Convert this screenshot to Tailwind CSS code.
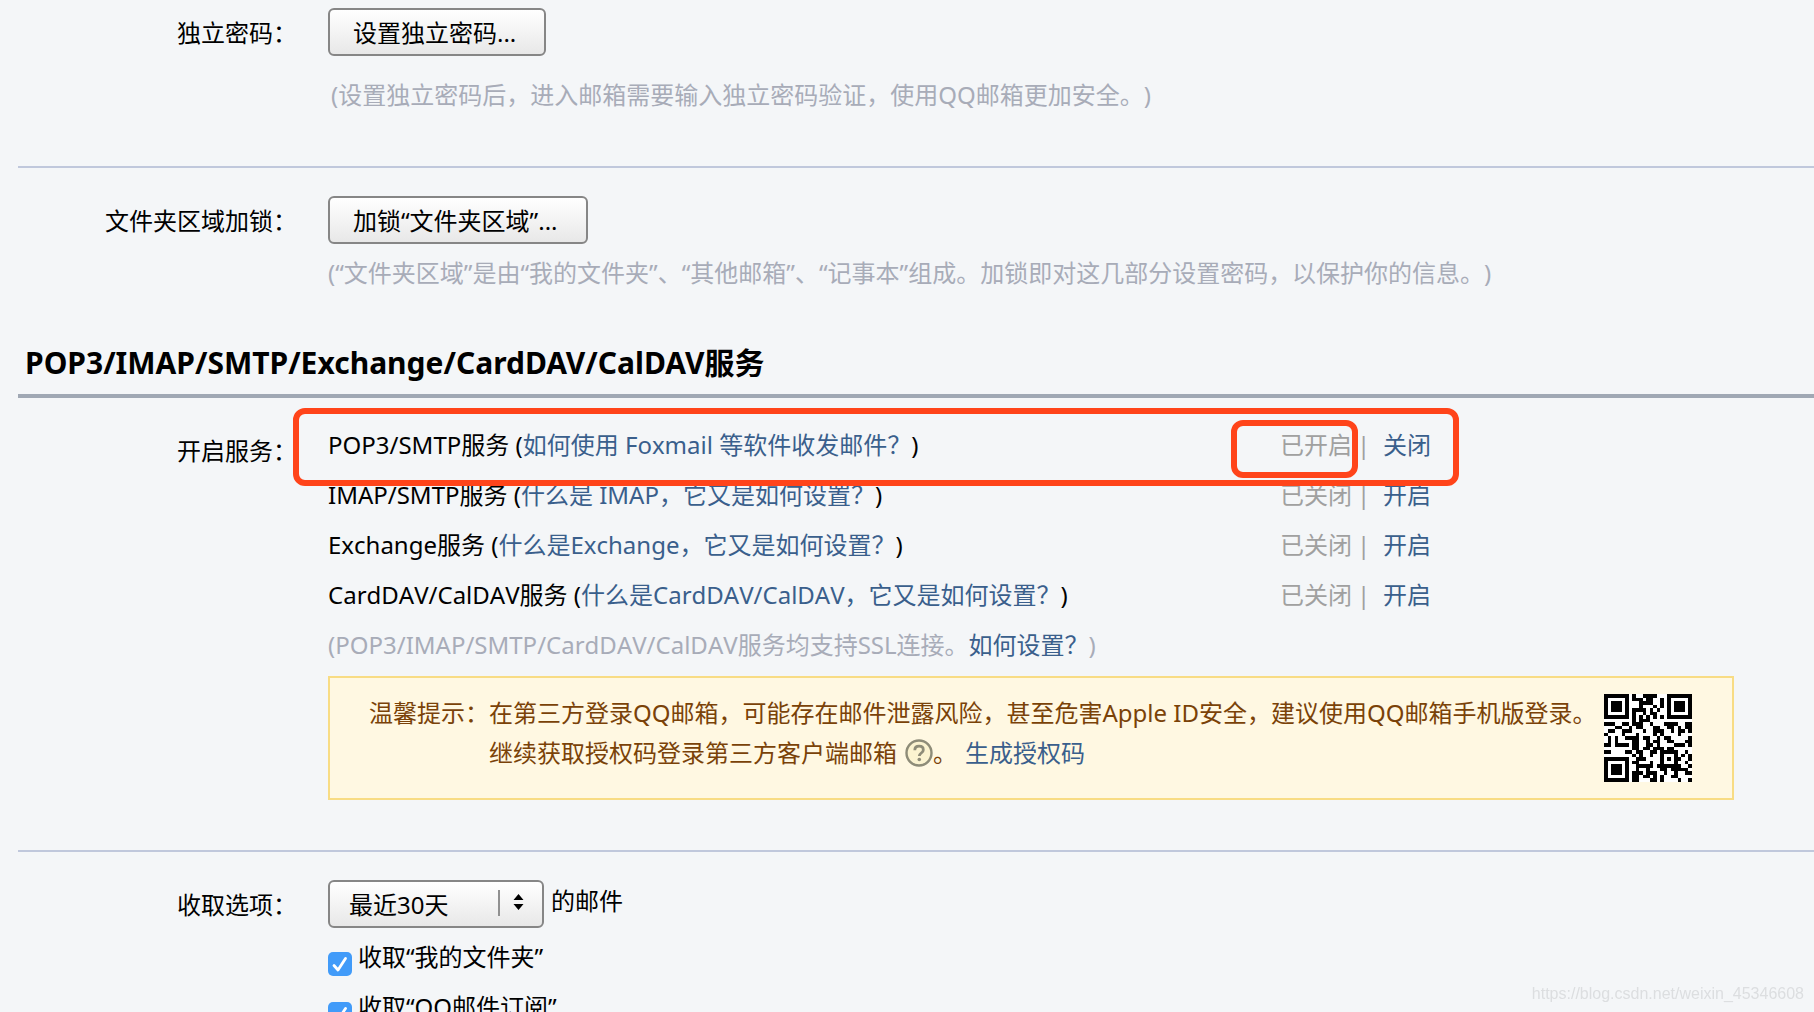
<!DOCTYPE html>
<html lang="zh-CN">
<head>
<meta charset="utf-8">
<title>邮箱设置</title>
<script src="https://cdn.jsdelivr.net/npm/@tailwindcss/browser@4"></script>
</head>
<body class="h-screen overflow-hidden bg-[#f4f6f8] font-['Noto_Sans','Noto_Sans_CJK_SC',sans-serif] text-2xl text-black [font-kerning:none] [text-spacing-trim:space-all]">
<main class="relative pl-[18px]">

  <section class="flex gap-[31px] border-b-2 border-[#c0c8dc] pt-2 pb-[53px]">
    <div class="w-[279px] shrink-0 text-right leading-[50px]">独立密码：</div>
    <div>
      <button type="button" class="block h-12 w-[218px] rounded-md border-2 border-[#868686] bg-linear-to-b from-white to-[#e8e8e8] pl-[23px] text-left leading-[46px] whitespace-nowrap">设置独立密码...</button>
      <p class="mt-[21px] pl-[3px] leading-9 whitespace-nowrap text-[#a8acb8]">(设置独立密码后，进入邮箱需要输入独立密码验证，使用QQ邮箱更加安全。)</p>
    </div>
  </section>

  <section class="flex gap-[31px] pt-7">
    <div class="w-[279px] shrink-0 text-right leading-[50px]">文件夹区域加锁：</div>
    <div>
      <button type="button" class="block h-12 w-[260px] rounded-md border-2 border-[#868686] bg-linear-to-b from-white to-[#e8e8e8] pl-[23px] text-left leading-[46px] whitespace-nowrap">加锁“文件夹区域”...</button>
      <p class="mt-[11px] leading-9 whitespace-nowrap text-[#a8acb8]">(“文件夹区域”是由“我的文件夹”、“其他邮箱”、“记事本”组成。加锁即对这几部分设置密码，以保护你的信息。)</p>
    </div>
  </section>

  <h2 class="mt-[52px] border-b-4 border-[#a0a8b4] pb-[11px] pl-[7px] text-[30px] leading-10 font-bold [font-kerning:normal]">POP3/IMAP/SMTP/Exchange/CardDAV/CalDAV服务</h2>

  <section class="flex gap-[31px] border-b-2 border-[#c0c8dc] pt-[22px] pb-[50px]">
    <div class="w-[279px] shrink-0 pt-[6px] text-right leading-[50px]">开启服务：</div>
    <div class="min-w-0 flex-1 pr-20">
      <ul class="leading-[50px] whitespace-nowrap">
        <li class="relative flex">
          <span class="w-[952px]">POP3/SMTP服务 (<a href="#" class="text-[#3a5f8c]">如何使用 Foxmail 等软件收发邮件？</a>)</span>
          <span class="w-[77px] text-[#a0a0a0]">已开启</span><span class="w-[26px] text-[#a0a0a0]">|</span>
          <a href="#" class="text-[#3a5f8c]">关闭</a>
          <span class="pointer-events-none absolute -top-3 -left-[35px] h-[78px] w-[1166px] rounded-xl border-6 border-[#ff441a]"></span>
          <span class="pointer-events-none absolute top-0 left-[903px] h-[58px] w-[127px] rounded-xl border-6 border-[#ff441a]"></span>
        </li>
        <li class="flex">
          <span class="w-[952px]">IMAP/SMTP服务 (<a href="#" class="text-[#3a5f8c]">什么是 IMAP，它又是如何设置？</a>)</span>
          <span class="w-[77px] text-[#a0a0a0]">已关闭</span><span class="w-[26px] text-[#a0a0a0]">|</span>
          <a href="#" class="text-[#3a5f8c]">开启</a>
        </li>
        <li class="flex">
          <span class="w-[952px]">Exchange服务 (<a href="#" class="text-[#3a5f8c]">什么是Exchange，它又是如何设置？</a>)</span>
          <span class="w-[77px] text-[#a0a0a0]">已关闭</span><span class="w-[26px] text-[#a0a0a0]">|</span>
          <a href="#" class="text-[#3a5f8c]">开启</a>
        </li>
        <li class="flex">
          <span class="w-[952px]">CardDAV/CalDAV服务 (<a href="#" class="text-[#3a5f8c]">什么是CardDAV/CalDAV，它又是如何设置？</a>)</span>
          <span class="w-[77px] text-[#a0a0a0]">已关闭</span><span class="w-[26px] text-[#a0a0a0]">|</span>
          <a href="#" class="text-[#3a5f8c]">开启</a>
        </li>
        <li class="text-[#a8acb8]">(POP3/IMAP/SMTP/CardDAV/CalDAV服务均支持SSL连接。<a href="#" class="text-[#3a5f8c]">如何设置？</a>)</li>
      </ul>
      <div class="mt-[6px] flex h-[124px] justify-between border-2 border-[#f8dc84] bg-[#fff8e2] pt-[15px] pr-10 pl-[39px] text-[#7a4208]">
        <div class="flex leading-10 whitespace-nowrap">
          <span>温馨提示：</span>
          <div>
            <p>在第三方登录QQ邮箱，可能存在邮件泄露风险，甚至危害Apple ID安全，建议使用QQ邮箱手机版登录。</p>
            <p class="flex items-center">继续获取授权码登录第三方客户端邮箱<svg class="ml-2 size-7" viewBox="0 0 28 28" fill="none" role="img" aria-label="帮助"><circle cx="14" cy="14" r="12.5" fill="#fbf3d0" stroke="#8e8c78" stroke-width="2.4"/><path d="M9.8 11.2c0-2.6 1.8-4 4.3-4s4.2 1.4 4.2 3.7c0 3.2-4 3-4 6.2" stroke="#8e8c78" stroke-width="2.8"/><circle cx="14.3" cy="20.5" r="1.8" fill="#8e8c78"/></svg>。<a href="#" class="ml-2 text-[#3a5f8c]">生成授权码</a></p>
          </div>
        </div>
        <svg id="qr" class="mt-px size-[88px] shrink-0" viewBox="0 0 25 25" shape-rendering="crispEdges" role="img" aria-label="二维码"></svg>
      </div>
    </div>
  </section>

  <section class="flex gap-[31px] pt-7">
    <div class="w-[279px] shrink-0 text-right leading-[50px]"><label for="range">收取选项：</label></div>
    <div>
      <div class="flex gap-[7px]">
        <div class="relative">
          <select id="range" class="block h-12 w-[216px] appearance-none rounded-md border-2 border-[#868686] bg-linear-to-b from-white to-[#e8e8e8] pt-[2px] pl-[19px]"><option>最近30天</option><option>全部</option></select>
          <svg class="pointer-events-none absolute top-[10px] right-[18px] h-[26px] w-7" viewBox="0 0 28 26"><path d="M1 0v26" stroke="#909090" stroke-width="2"/><path d="M15.5 10l5-6 5 6zM15.5 14h10l-5 6z"/></svg>
        </div>
        <label for="range" class="leading-[42px]">的邮件</label>
      </div>
      <div class="mt-1">
        <div class="flex h-[50px] gap-[6px]">
          <span class="relative mt-5 size-6"><input id="f1" type="checkbox" checked class="block size-6 appearance-none rounded-[5px] bg-[#419bf9]"><svg class="pointer-events-none absolute inset-0" viewBox="0 0 24 24" fill="none" stroke="#fff" stroke-width="2.8" stroke-linecap="round" stroke-linejoin="round"><path d="M6 13.5l4 4.5L17.5 6.5"/></svg></span>
          <label for="f1" class="leading-[50px]">收取“我的文件夹”</label>
        </div>
        <div class="flex h-[50px] gap-[6px]">
          <span class="relative mt-5 size-6"><input id="f2" type="checkbox" checked class="block size-6 appearance-none rounded-[5px] bg-[#419bf9]"><svg class="pointer-events-none absolute inset-0" viewBox="0 0 24 24" fill="none" stroke="#fff" stroke-width="2.8" stroke-linecap="round" stroke-linejoin="round"><path d="M6 13.5l4 4.5L17.5 6.5"/></svg></span>
          <label for="f2" class="leading-[50px]">收取“QQ邮件订阅”</label>
        </div>
      </div>
    </div>
  </section>
</main>
<div class="fixed right-[10px] bottom-2 font-['Liberation_Sans',sans-serif] text-base leading-5 text-[#dcdee0]">https://blog.csdn.net/weixin_45346608</div>
<script>
// Version 2-L QR code (25 modules), byte mode, one Reed-Solomon block, mask 1
function qr(text) {
  const N = 25, dataLen = 34, ecLen = 10, mask = 1;
  const bits = [];
  const put = (v, n) => { for (let i = n - 1; i >= 0; i--) bits.push(v >> i & 1); };
  put(4, 4); put(text.length, 8);
  for (const c of text) put(c.charCodeAt(0), 8);
  put(0, 4);
  while (bits.length % 8) bits.push(0);
  const data = [];
  for (let i = 0; i < bits.length; i += 8) data.push(parseInt(bits.slice(i, i + 8).join(''), 2));
  for (let p = 0; data.length < dataLen; p++) data.push(p % 2 ? 0x11 : 0xec);
  const mul = (a, b) => { let r = 0; for (; b; b >>= 1) { if (b & 1) r ^= a; a <<= 1; if (a & 256) a ^= 0x11d; } return r; };
  let gen = [1], root = 1;
  for (let i = 0; i < ecLen; i++) {
    const next = gen.concat(0);
    gen.forEach((g, j) => { next[j + 1] ^= mul(g, root); });
    gen = next; root = mul(root, 2);
  }
  const rem = data.concat(Array(ecLen).fill(0));
  for (let i = 0; i < data.length; i++) { const f = rem[i]; if (f) gen.forEach((g, j) => { rem[i + j] ^= mul(g, f); }); }
  const stream = data.concat(rem.slice(data.length)).flatMap(b => [7, 6, 5, 4, 3, 2, 1, 0].map(i => b >> i & 1));
  const m = Array.from({ length: N }, () => Array(N).fill(null));
  const finder = (r, c) => {
    for (let i = -1; i < 8; i++) for (let j = -1; j < 8; j++) {
      if (r + i < 0 || c + j < 0 || r + i >= N || c + j >= N) continue;
      const d = Math.max(Math.abs(i - 3), Math.abs(j - 3));
      m[r + i][c + j] = d === 3 || d < 2 ? 1 : 0;
    }
  };
  finder(0, 0); finder(0, 18); finder(18, 0);
  for (let i = 8; i < 17; i++) m[6][i] = m[i][6] = 1 - i % 2;
  for (let i = -2; i < 3; i++) for (let j = -2; j < 3; j++) m[18 + i][18 + j] = Math.max(Math.abs(i), Math.abs(j)) === 1 ? 0 : 1;
  const fmt = 1 << 3 | mask;
  let f = fmt << 10;
  for (let i = 14; i >= 10; i--) if (f >> i & 1) f ^= 0x537 << (i - 10);
  f = (fmt << 10 | f) ^ 0x5412;
  for (let i = 0; i < 15; i++) {
    const b = f >> i & 1;
    m[i < 6 ? i : i < 8 ? i + 1 : N - 15 + i][8] = b;
    m[8][i < 8 ? N - 1 - i : i === 8 ? 7 : 14 - i] = b;
  }
  m[17][8] = 1;
  let k = 0, up = true;
  for (let col = N - 1; col > 0; col -= 2) {
    if (col === 6) col--;
    for (let i = 0; i < N; i++) {
      const r = up ? N - 1 - i : i;
      for (const c of [col, col - 1]) if (m[r][c] === null) m[r][c] = (stream[k++] || 0) ^ (r % 2 ? 0 : 1);
    }
    up = !up;
  }
  return '<path fill="#fff" d="M0 0h25v25H0z"/><path d="' + m.map((row, y) => row.map((v, x) => v ? `M${x} ${y}h1v1h-1z` : '').join('')).join('') + '"/>';
}
document.getElementById('qr').innerHTML = qr('http://url.cn/48ScVSu');
</script>
</body>
</html>
